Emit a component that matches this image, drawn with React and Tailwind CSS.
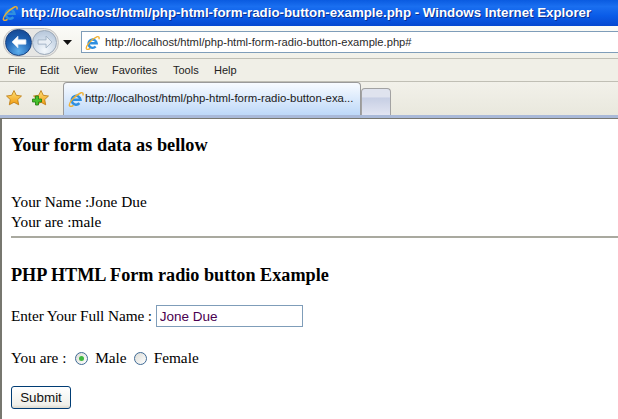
import React from 'react';

const SERIF = 'font-["Liberation_Serif",serif]';
const UI = 'font-["Liberation_Sans",sans-serif]';

function IeLogo({ size = 16 }) {
  return (
    <svg width={size} height={size} viewBox="0 0 16 16" className="shrink-0">
      <path d="M4.200 8.800h8.300A4.400 4.400 0 1 0 11.400 12.200" fill="none" stroke="#2f8fe0" strokeWidth="2.500" />
      <path d="M1.500 14.800C.3 12.500 6 5 12.500 2c2-.9 3.200.2 2.300 2.600M1.500 14.800c.8.900 2.500.5 4-.5" fill="none" stroke="#f0b030" strokeWidth="1.400" />
    </svg>
  );
}

function Star({ plus }) {
  return (
    <svg width="18" height="18" viewBox="0 0 18 18" className="shrink-0">
      <defs>
        <linearGradient id="starFill" x1="0" y1="0" x2="0" y2="1">
          <stop offset="0" stopColor="#ffe27a" />
          <stop offset="1" stopColor="#f09a10" />
        </linearGradient>
      </defs>
      <path
        d="M9 1.500l2.300 4.800 5.200.7-3.800 3.600 1 5.200L9 13.300l-4.700 2.500 1-5.200L1.500 7l5.200-.7z"
        fill="url(#starFill)"
        stroke="#b9770e"
        strokeWidth="0.8"
      />
      {plus && (
        <path
          d="M3.500 7h3v3h3v3h-3v3h-3v-3H.5v-3h3z"
          fill="#46c02c"
          stroke="#1f7a12"
          strokeWidth="0.8"
        />
      )}
    </svg>
  );
}

function NavButton({ dir, active }) {
  const fill = active
    ? 'w-[27px] h-[27px] bg-[radial-gradient(circle_at_50%_85%,#5fb0ee,#1c5fb0_55%,#12408a)] border-[#17407e]'
    : 'w-[25px] h-[25px] bg-[radial-gradient(circle_at_50%_85%,#f4f8fc,#c8d6e6_60%,#aebfd4)] border-[#9aa8b8]';
  return (
    <div className={`rounded-full border flex items-center justify-center ${fill}`}>
      <svg width="16" height="14" viewBox="0 0 15 13">
        <path
          d={dir === 'left' ? 'M1 6.500L6.500 1v3.500H14v4H6.500V12z' : 'M14 6.500L8.500 1v3.500H1v4h7.500V12z'}
          fill={active ? '#ffffff' : '#e8eef5'}
          stroke={active ? '#dfe9f5' : '#94a6bb'}
          strokeWidth="0.7"
        />
      </svg>
    </div>
  );
}

function Chrome() {
  return (
    <div className={`${UI} flex flex-col`}>
      <div className="h-[26px] flex items-center pl-[2px] gap-[3px] bg-[linear-gradient(180deg,#0a5be0_0%,#1a6ff0_25%,#0a5ce8_60%,#0648d0_100%)]">
        <IeLogo size={16} />
        <span className="text-white font-bold text-[13.3px] leading-none whitespace-nowrap [text-shadow:1px_1px_0_#0a2f90]">
          http://localhost/html/php-html-form-radio-button-example.php - Windows Internet Explorer
        </span>
      </div>

      <div className="h-[32px] flex items-center bg-[linear-gradient(180deg,#fbfbf8,#f1f0e8)]">
        <div className="ml-[3px] flex items-center rounded-full bg-[#e6e6e4] border border-[#c4c4c4] px-px">
          <NavButton dir="left" active />
          <NavButton dir="right" />
        </div>
        <svg width="9" height="5" viewBox="0 0 9 5" className="ml-[4px]">
          <path d="M0 0h9L4.500 5z" fill="#111111" />
        </svg>
        <div className="ml-[9px] flex-1 h-[22px] flex items-center bg-white border border-r-0 border-[#7f9db9]">
          <div className="ml-[3px] w-[15px] h-[16px] flex items-center justify-center">
            <IeLogo size={15} />
          </div>
          <span className="ml-[5px] text-[11.2px] text-[#2a2a2a] whitespace-nowrap">
            http://localhost/html/php-html-form-radio-button-example.php#
          </span>
        </div>
      </div>

      <div className="h-[24px] flex items-center pl-[8px] bg-[#f0efe7] border-y border-[#c0bfb5] text-[11px] text-[#222222]">
        <span className="w-[32px]">File</span>
        <span className="w-[34px]">Edit</span>
        <span className="w-[38px]">View</span>
        <span className="w-[61px]">Favorites</span>
        <span className="w-[41px]">Tools</span>
        <span>Help</span>
      </div>

      <div className="h-[36px] flex items-end bg-[linear-gradient(180deg,#f2f1ea,#e9e8dd)] border-b-[3px] border-[#a9b9d8]">
        <div className="self-center flex items-center gap-[9px] pl-[5px] w-[63px] mb-px">
          <Star />
          <Star plus />
        </div>
        <div className="h-[33px] w-[298px] flex items-center pl-[4px] rounded-t-[4px] border border-b-0 border-[#9a9a9a] bg-[linear-gradient(180deg,#f8fbff,#bdd8f8)]">
          <IeLogo size={16} />
          <span className="ml-px text-[11.4px] text-[#1a1a1a] whitespace-nowrap">
            http://localhost/html/php-html-form-radio-button-exa...
          </span>
        </div>
        <div className="h-[27px] w-[30px] rounded-t-[4px] border border-b-0 border-[#a2a2a2] bg-[linear-gradient(180deg,#dfe3ee_30%,#c7cfe4_35%,#e2e5f2)]" />
      </div>
      <div className="h-px bg-[#77776f]" />
    </div>
  );
}

export default function App() {
  return (
    <div className="w-[618px] h-[419px] overflow-hidden bg-white">
      <Chrome />
      <div className={`${SERIF} h-[301px] border-l-2 border-[#77776f] text-[15.3px] leading-[20px] text-black`}>
        <div className="pl-[9px] pt-[15px]">
          <h3 className="text-[18.3px] leading-[22px] font-bold">Your form data as bellow</h3>
          <p className="mt-[36px]">Your Name :Jone Due</p>
          <p>Your are :male</p>
        </div>
        <hr className="mt-[4px] ml-[9px] border-0 h-[2px] bg-[#a9a99f]" />
        <div className="pl-[9px] pt-[26px]">
          <h3 className="text-[18.2px] leading-[22px] font-bold">PHP HTML Form radio button Example</h3>
          <div className="mt-[19px] h-[22px] flex items-center whitespace-pre">
            <span className="tracking-[-0.1px]">Enter Your Full Name : </span>
            <input
              readOnly
              value="Jone Due"
              className={`${UI} w-[147px] h-[22px] px-[3px] border border-[#7f9db9] bg-white text-[13.5px] text-[#4a0050] outline-none`}
            />
          </div>
          <div className="mt-[21px] h-[20px] flex items-center whitespace-pre">
            <span>You are : </span>
            <span className="ml-[5px] w-[13px] h-[13px] rounded-full border border-[#3f6a95] bg-[linear-gradient(135deg,#dcdcd6,#ffffff)] flex items-center justify-center">
              <span className="w-[5px] h-[5px] rounded-full bg-[#3fb83f]" />
            </span>
            <span className="ml-[7px]">Male</span>
            <span className="ml-[7px] w-[13px] h-[13px] rounded-full border border-[#3f6a95] bg-[linear-gradient(135deg,#dcdcd6,#ffffff)]" />
            <span className="ml-[7px]">Female</span>
          </div>
          <button
            className={`${UI} block mt-[18px] w-[60px] h-[23px] rounded-[3px] border border-[#003c74] bg-[linear-gradient(180deg,#ffffff,#f0f0ea_85%,#dcd8cc)] text-[13.4px] text-[#111111]`}
          >
            Submit
          </button>
        </div>
      </div>
    </div>
  );
}
